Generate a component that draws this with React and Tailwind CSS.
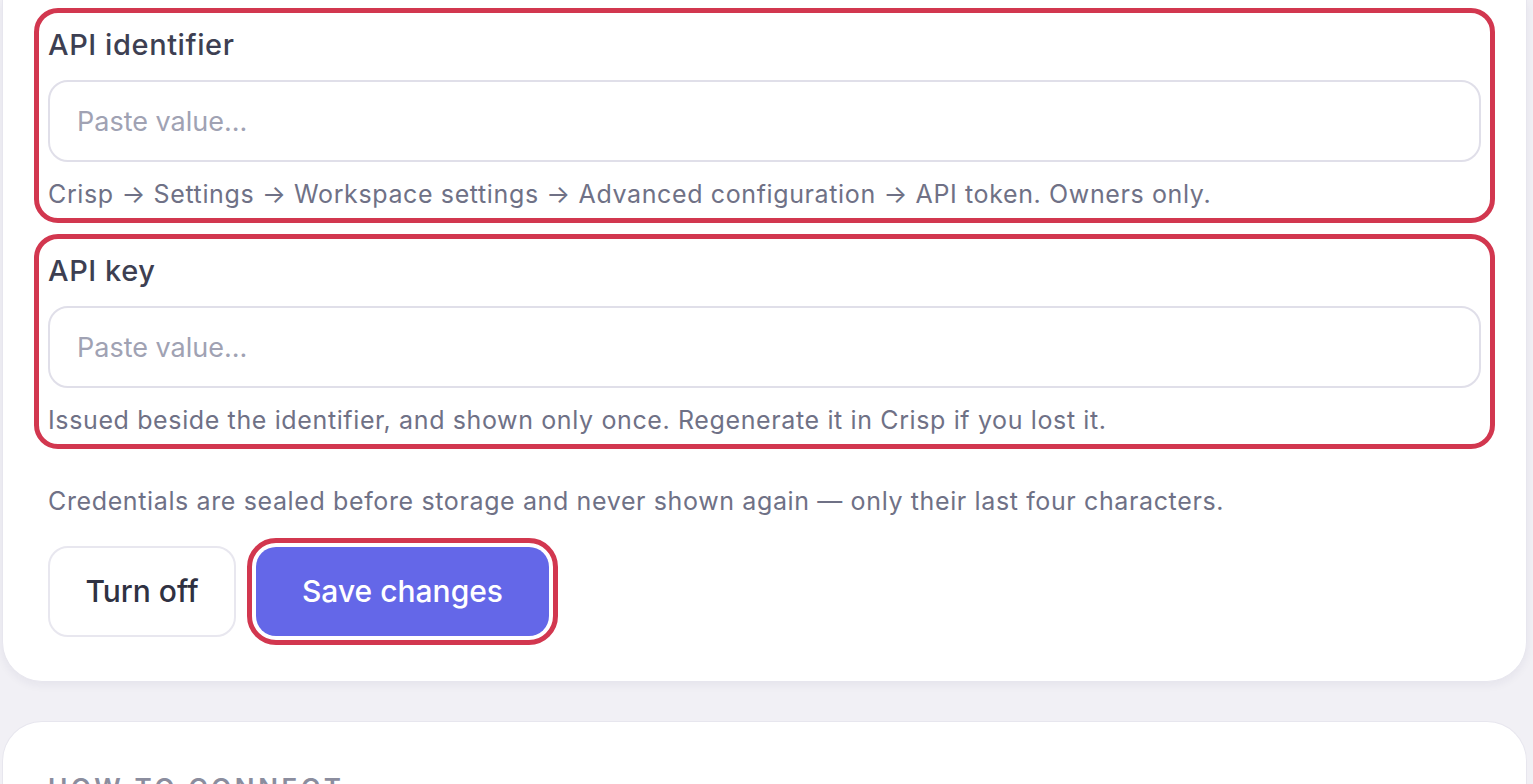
import React from 'react'

function Field({ label, hint, className = '' }) {
  return (
    <div className={`rounded-[10px] outline-[5px] outline-solid outline-[#d2374f] outline-offset-[9px] ${className}`}>
      <div className="text-[29px] leading-[46px] font-medium tracking-[0.02em] text-[#3d3f52]">{label}</div>
      <input
        type="text"
        placeholder="Paste value..."
        className="mt-[12px] block w-full h-[82px] rounded-[20px] border-2 border-[#e0dfe9] bg-white px-[27px] text-[27px] text-[#3b3d50] placeholder:text-[#a0a2b3] outline-none"
      />
      <p className="mt-[17px] text-[25px] leading-[30px] tracking-[0.025em] text-[#6f7186]">{hint}</p>
    </div>
  )
}

export default function App() {
  return (
    <div className="h-[784px] overflow-hidden bg-[#f1f0f5] font-['Inter',sans-serif]">
      <div className="ml-[2px] mr-[6px] bg-white rounded-b-[40px] border border-t-0 border-[#e7e6ee] shadow-[0_3px_10px_rgba(40,40,80,0.06)] pl-[45px] pr-[45px] pt-[22px] pb-[44px]">
        <Field
          label="API identifier"
          hint="Crisp → Settings → Workspace settings → Advanced configuration → API token. Owners only."
        />
        <Field
          className="mt-[39px]"
          label="API key"
          hint="Issued beside the identifier, and shown only once. Regenerate it in Crisp if you lost it."
        />

        <p className="mt-[51px] text-[25px] leading-[30px] tracking-[0.025em] text-[#6f7186]">
          Credentials are sealed before storage and never shown again — only their last four characters.
        </p>

        <div className="mt-[30px] flex items-center gap-[20px]">
          <button className="w-[188px] h-[91px] rounded-[20px] border-2 border-[#e8e7ef] bg-white text-[30px] font-medium text-[#2f3142]">
            Turn off
          </button>
          <button className="w-[293px] h-[89px] rounded-[20px] bg-[#6467e8] text-[30px] font-medium text-white outline-[5px] outline-solid outline-[#d2374f] outline-offset-[4px]">
            Save changes
          </button>
        </div>
      </div>

      <div className="mt-[39px] ml-[2px] mr-[6px] bg-white rounded-t-[40px] border border-b-0 border-[#e7e6ee] pl-[45px] pt-[52px] h-[200px]">
        <h3 className="text-[26px] leading-[28px] font-semibold uppercase tracking-[0.14em] text-[#8b8d9e]">
          How to connect
        </h3>
      </div>
    </div>
  )
}
